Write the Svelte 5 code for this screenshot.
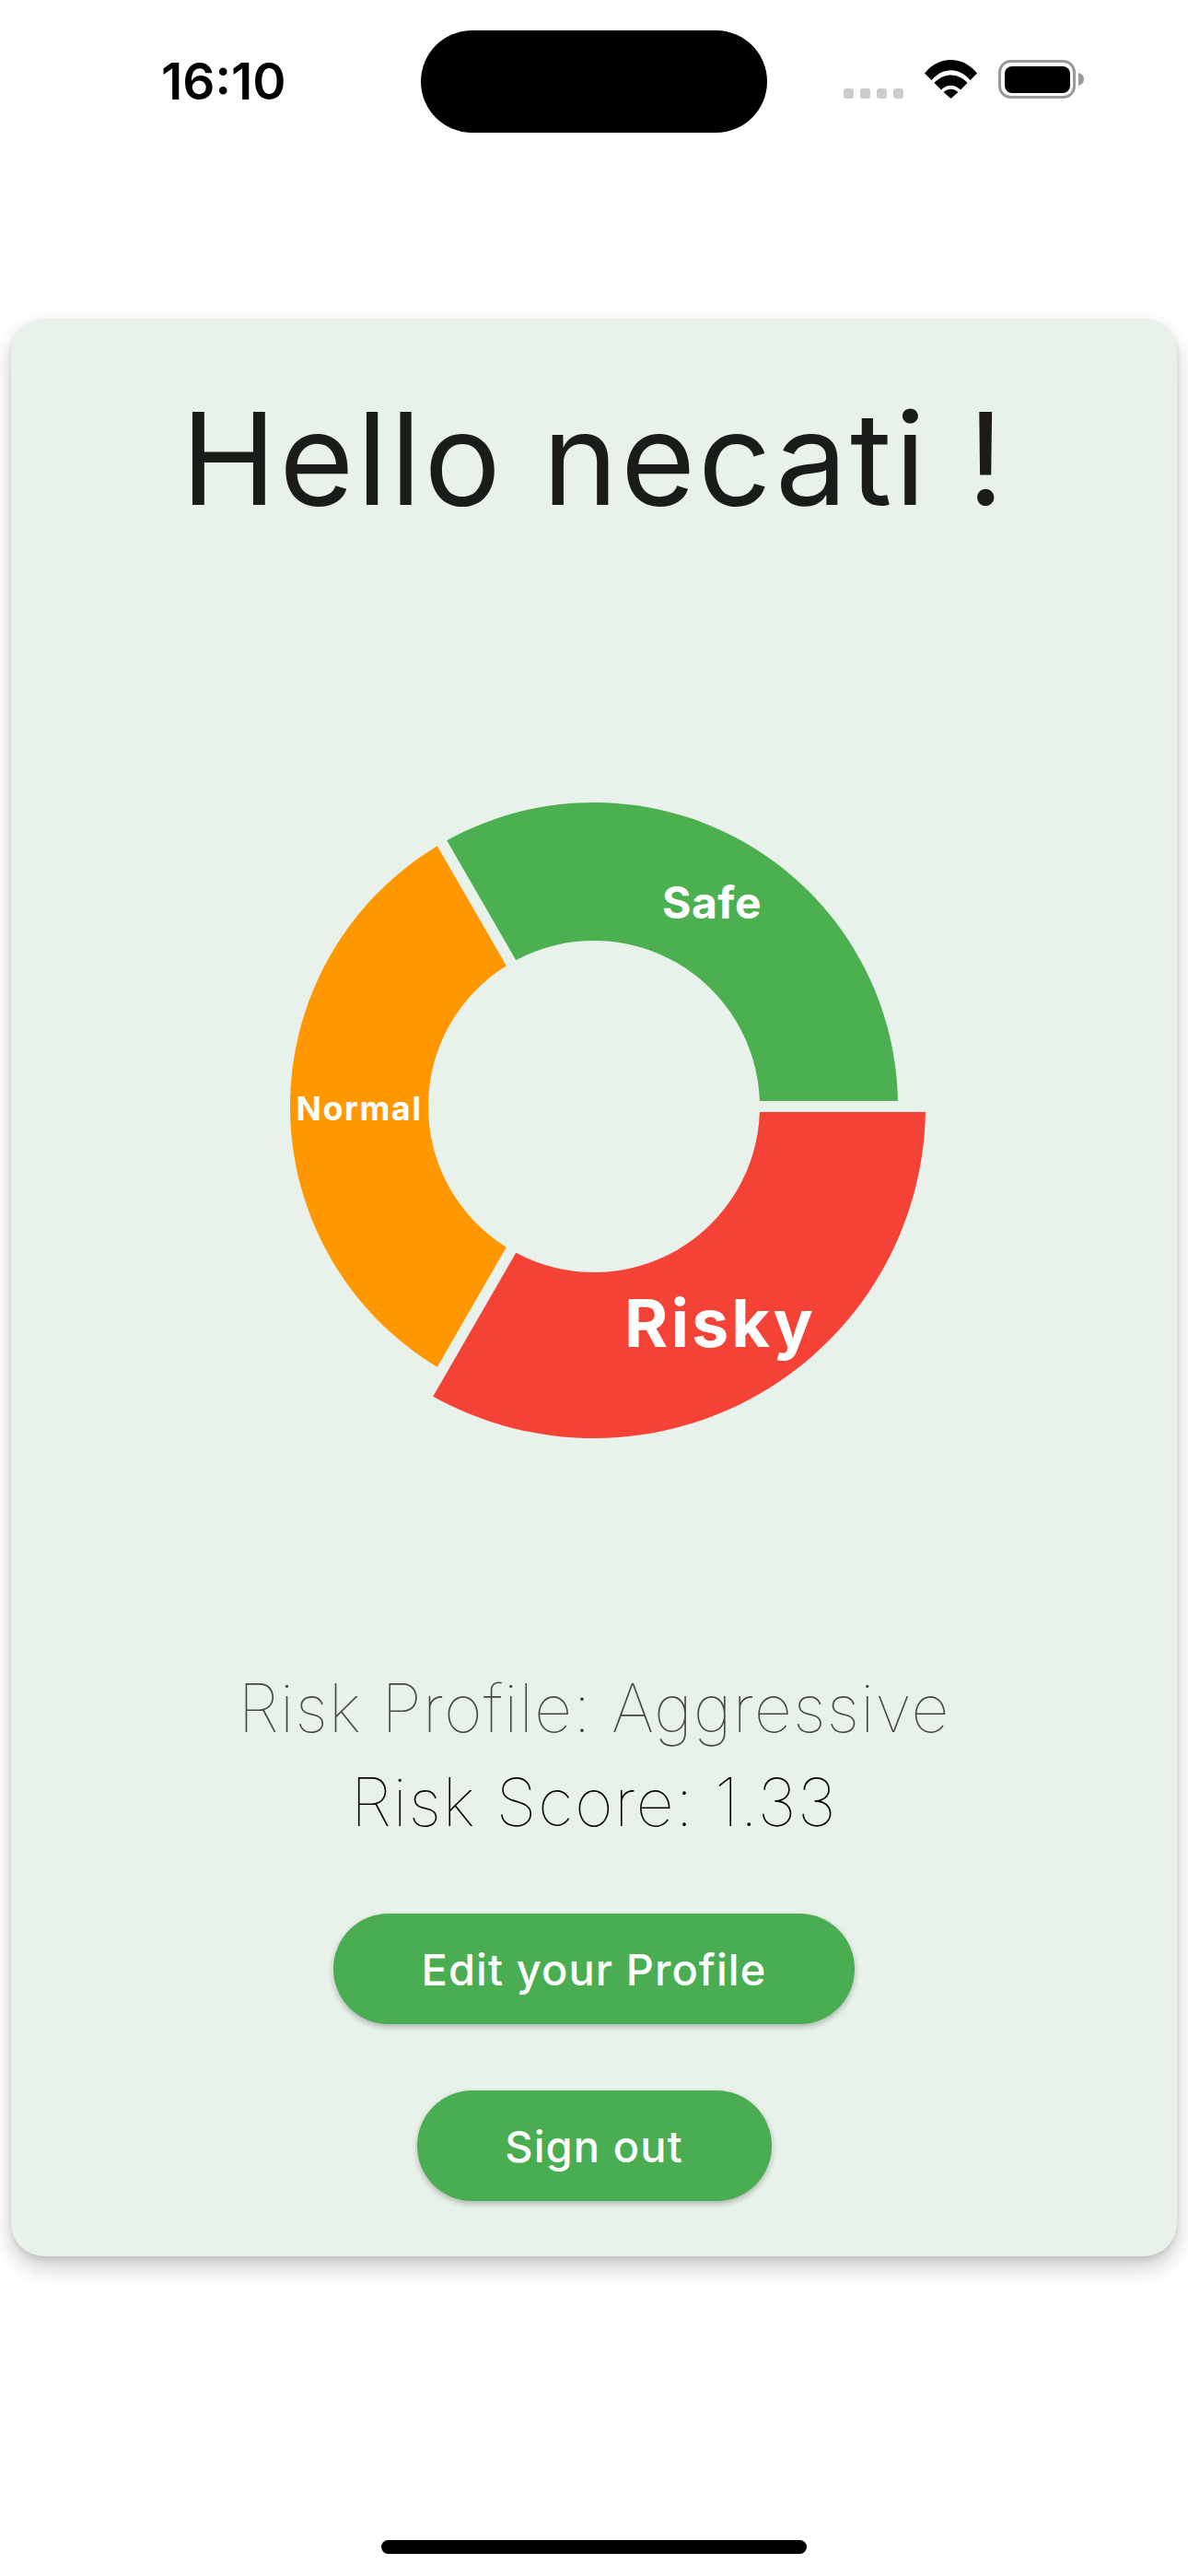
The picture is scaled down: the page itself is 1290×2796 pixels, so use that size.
<script lang="ts">
	// donut geometry, all in svg units (center 380,380)
	const cx = 380;
	const cy = 380;
	const inner = 180;
	const gap = 12;

	const slices = [
		{ name: 'Risky', color: '#f44336', outer: 360, from: 0, to: 120, x: 517, y: 641, cls: 'big' },
		{ name: 'Normal', color: '#ff9800', outer: 330, from: 120, to: 240, x: 125, y: 395, cls: 'small' },
		{ name: 'Safe', color: '#4caf50', outer: 330, from: 240, to: 360, x: 508, y: 176, cls: 'mid' }
	];

	const pt = (r: number, deg: number) => {
		const a = (deg * Math.PI) / 180;
		return `${(cx + r * Math.cos(a)).toFixed(2)} ${(cy + r * Math.sin(a)).toFixed(2)}`;
	};

	const slicePath = (from: number, to: number, outer: number) => {
		// keep the gap between slices parallel, so the trim differs per radius
		const trimOuter = (Math.asin(gap / 2 / outer) * 180) / Math.PI;
		const trimInner = (Math.asin(gap / 2 / inner) * 180) / Math.PI;
		return [
			`M${pt(inner, from + trimInner)}`,
			`L${pt(outer, from + trimOuter)}`,
			`A${outer} ${outer} 0 0 1 ${pt(outer, to - trimOuter)}`,
			`L${pt(inner, to - trimInner)}`,
			`A${inner} ${inner} 0 0 0 ${pt(inner, from + trimInner)}`,
			'Z'
		].join(' ');
	};
</script>

<div class="screen">
	<header class="status">
		<span class="time">16:10</span>
		<div class="island"></div>
		<div class="indicators">
			<div class="dots"><i></i><i></i><i></i><i></i></div>
			<svg class="wifi" width="57" height="42" viewBox="0 0 57 42">
				<path d="M0 14.500C15.500 -4.800 41.500 -4.800 57 14.500L49.500 22C37.500 7.500 19.500 7.500 7.500 22Z" />
				<path d="M10.500 25C20.500 13.500 36.500 13.500 46.500 25L39 32.500C33 26 24 26 18 32.500Z" />
				<path d="M20.500 35C25 30.500 32 30.500 36.500 35L28.500 42Z" />
			</svg>
			<svg class="battery" width="93" height="42" viewBox="0 0 93 42">
				<rect x="1.500" y="1.500" width="81" height="39" rx="12" fill="none" stroke="#999" stroke-width="3" />
				<rect x="7" y="7" width="71" height="29" rx="8" />
				<path d="M87 14C90.500 15 93 17.500 93 21C93 24.500 90.500 27 87 28Z" fill="#999" />
			</svg>
		</div>
	</header>

	<main class="card">
		<h1>Hello necati !</h1>

		<svg class="chart" width="760" height="760" viewBox="0 0 760 760">
			{#each slices as s}
				<path d={slicePath(s.from, s.to, s.outer)} fill={s.color} />
			{/each}
			{#each slices as s}
				<text class={s.cls} x={s.x} y={s.y} text-anchor="middle">{s.name}</text>
			{/each}
		</svg>

		<p class="profile">Risk Profile: Aggressive</p>
		<p class="score">Risk Score: 1.33</p>

		<button type="button" class="edit">Edit your Profile</button>
		<button type="button" class="signout">Sign out</button>
	</main>

	<div class="home"></div>
</div>

<style>
	:global(body) {
		margin: 0;
		background: #fff;
	}
	.screen {
		width: 1290px;
		height: 2796px;
		display: flex;
		flex-direction: column;
		font-family: Inter, 'Liberation Sans', sans-serif;
		overflow: hidden;
	}
	.status {
		height: 346px;
		box-sizing: border-box;
		padding: 33px 113px 0 175px;
		display: grid;
		grid-template-columns: 282px 376px 1fr;
		align-items: start;
	}
	.time {
		font-size: 55px;
		font-weight: 600;
		line-height: 111px;
		color: #000;
	}
	.island {
		height: 111px;
		background: #000;
		border-radius: 56px;
	}
	.indicators {
		display: flex;
		align-items: flex-end;
		justify-content: flex-end;
		margin-top: 32px;
	}
	.dots {
		display: flex;
		gap: 7px;
		margin-right: 23px;
	}
	.dots i {
		display: block;
		width: 11px;
		height: 11px;
		border-radius: 3px;
		background: #ccc;
	}
	.wifi {
		display: block;
		margin-right: 23px;
	}
	.battery {
		display: block;
	}
	.card {
		margin: 0 12px;
		height: 2103px;
		box-sizing: border-box;
		background: #e8f1ea;
		border-radius: 36px;
		box-shadow: 0 12px 24px rgba(0, 0, 0, 0.2), 0 3px 6px rgba(0, 0, 0, 0.1);
		display: flex;
		flex-direction: column;
		align-items: center;
	}
	h1 {
		margin: 72px 0 0;
		font-size: 139px;
		font-weight: 400;
		line-height: 160px;
		color: #1a1c19;
		letter-spacing: 3px;
	}
	.chart {
		display: block;
		margin-top: 243px;
	}
	.chart text {
		fill: #fff;
		font-weight: 650;
	}
	.big {
		font-size: 72px;
		letter-spacing: 3px;
	}
	.mid {
		font-size: 48px;
		letter-spacing: 0.5px;
	}
	.small {
		font-size: 36px;
		letter-spacing: 1.5px;
	}
	p {
		margin: 0;
		font-size: 72px;
		line-height: 102px;
		font-weight: 100;
	}
	.profile {
		margin-top: 222px;
		letter-spacing: 1px;
		color: #44483f;
	}
	.score {
		letter-spacing: 1.4px;
		color: #000;
	}
	button {
		display: block;
		border: none;
		height: 120px;
		border-radius: 60px;
		background: #4aad52;
		color: #fff;
		font-family: inherit;
		font-size: 47px;
		font-weight: 450;
		letter-spacing: 1.1px;
		box-shadow: 0 3px 6px rgba(0, 0, 0, 0.25);
	}
	.edit {
		width: 566px;
		margin-top: 70px;
	}
	.signout {
		width: 385px;
		margin-top: 72px;
	}
	.home {
		width: 462px;
		height: 15px;
		border-radius: 8px;
		background: #000;
		margin: 308px auto 0;
	}
</style>
